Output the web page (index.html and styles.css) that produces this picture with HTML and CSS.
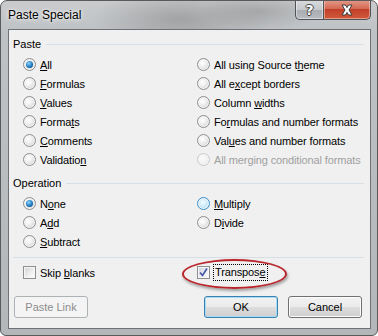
FILE: index.html
```html
<!DOCTYPE html>
<html>
<head>
<meta charset="utf-8">
<link rel="stylesheet" href="styles.css">
</head>
<body>
<div class="window">
  <div class="titlebar">
    <span class="title">Paste Special</span>
    <div class="caption">
      <div class="cap-btn help"><span>?</span></div>
      <div class="cap-btn close">
        <svg width="16" height="12" viewBox="0 0 16 12"><path d="M3 1 L6.5 1 L8 3.6 L9.5 1 L13 1 L10 6 L13 11 L9.5 11 L8 8.4 L6.5 11 L3 11 L6 6 Z" fill="#fff" stroke="#3b3b3b" stroke-width="1" stroke-linejoin="round"/></svg>
      </div>
    </div>
  </div>
  <div class="client">
    <div class="group-head"><span>Paste</span><i class="rule"></i></div>
    <div class="grid">
      <label class="opt"><span class="radio checked"></span><span><u>A</u>ll</span></label>
      <label class="opt"><span class="radio"></span><span>All using Source t<u>h</u>eme</span></label>
      <label class="opt"><span class="radio"></span><span><u>F</u>ormulas</span></label>
      <label class="opt"><span class="radio"></span><span>All e<u>x</u>cept borders</span></label>
      <label class="opt"><span class="radio"></span><span><u>V</u>alues</span></label>
      <label class="opt"><span class="radio"></span><span>Column <u>w</u>idths</span></label>
      <label class="opt"><span class="radio"></span><span>Forma<u>t</u>s</span></label>
      <label class="opt"><span class="radio"></span><span>Fo<u>r</u>mulas and number formats</span></label>
      <label class="opt"><span class="radio"></span><span><u>C</u>omments</span></label>
      <label class="opt"><span class="radio"></span><span>Val<u>u</u>es and number formats</span></label>
      <label class="opt"><span class="radio"></span><span>Validatio<u>n</u></span></label>
      <label class="opt disabled"><span class="radio"></span><span>All merging conditional formats</span></label>
    </div>
    <div class="group-head second"><span>Operation</span><i class="rule"></i></div>
    <div class="grid">
      <label class="opt"><span class="radio checked"></span><span>N<u>o</u>ne</span></label>
      <label class="opt"><span class="radio hover"></span><span><u>M</u>ultiply</span></label>
      <label class="opt"><span class="radio"></span><span>A<u>d</u>d</span></label>
      <label class="opt"><span class="radio"></span><span>D<u>i</u>vide</span></label>
      <label class="opt"><span class="radio"></span><span><u>S</u>ubtract</span></label>
    </div>
    <div class="sep"></div>
    <div class="grid checks">
      <label class="opt"><span class="check"></span><span>Skip <u>b</u>lanks</span></label>
      <label class="opt"><span class="check checked"><svg width="11" height="11" viewBox="0 0 11 11"><path d="M2 5.5 L4.5 8.5 L9 1.5" fill="none" stroke="#4256a4" stroke-width="1.6"/></svg></span><span class="focus">Transpos<u>e</u></span></label>
    </div>
    <div class="buttons">
      <div class="btn disabled">Paste Link</div>
      <div class="btn default">OK</div>
      <div class="btn">Cancel</div>
    </div>
  </div>
  <div class="ellipse"></div>
</div>
</body>
</html>
```
FILE: styles.css
```css
* { box-sizing: border-box; }
html, body { margin: 0; padding: 0; }
body {
  width: 378px;
  height: 336px;
  background: #fff;
  font-family: "Liberation Sans", Arial, sans-serif;
  font-size: 11px;
  color: #000;
}
.window {
  position: relative;
  width: 378px;
  height: 336px;
  border: 1px solid #5a5a5a;
  border-radius: 7px 7px 6px 6px;
  background:
    radial-gradient(ellipse 90px 30px at 180px 18px, rgba(120,120,120,0.45), rgba(120,120,120,0) 100%),
    radial-gradient(ellipse 60px 20px at 260px 10px, rgba(110,110,110,0.35), rgba(110,110,110,0) 100%),
    linear-gradient(to bottom, #c9cbcd 0, #bfc2c5 30px, #b4b7ba 100%);
  padding: 0 6px 6px 7px;
  display: flex;
  flex-direction: column;
  overflow: hidden;
}
.titlebar {
  height: 28px;
  display: flex;
  align-items: flex-start;
  flex: none;
}
.title {
  margin-top: 6px;
  line-height: 16px;
  font-size: 12px;
  color: #000;
  text-shadow: 0 0 6px rgba(255,255,255,0.9), 0 0 3px rgba(255,255,255,0.8);
}
.caption {
  margin-left: auto;
  display: flex;
  margin-top: -1px;
}
.cap-btn {
  height: 20px;
  display: flex;
  align-items: center;
  justify-content: center;
  border: 1px solid #4f5358;
  border-top: none;
}
.help {
  width: 28px;
  border-radius: 0 0 0 5px;
  border-right: none;
  background: linear-gradient(to bottom, #d9dbde 0, #c6c9cc 50%, #a9adb1 51%, #b8bcc0 100%);
  box-shadow: inset 0 0 0 1px rgba(255,255,255,0.45);
}
.help span {
  font-family: "DejaVu Sans", sans-serif;
  font-weight: bold;
  font-size: 14px;
  line-height: 14px;
  color: #fff;
  text-shadow: -1px 0 #444, 1px 0 #444, 0 -1px #444, 0 1px #444;
}
.close {
  width: 48px;
  border-radius: 0 0 5px 0;
  background: linear-gradient(to bottom, #e49c8c 0, #d46a53 45%, #c2402a 50%, #d05a3a 100%);
  box-shadow: inset 0 0 0 1px rgba(255,220,210,0.5);
}
.client {
  flex: 1;
  background: #f0f0f0;
  border: 1px solid #6e7175;
  display: flex;
  flex-direction: column;
}
.group-head {
  display: flex;
  align-items: center;
  height: 14px;
  margin: 7px 6px 0 4px;
  line-height: 14px;
}
.group-head.second { margin-top: 7px; }
.rule {
  flex: 1;
  height: 1px;
  background: #d5dfe5;
  margin-left: 5px;
}
.grid {
  display: grid;
  grid-template-columns: 174px 1fr;
  grid-auto-rows: 19px;
  padding-left: 14px;
  margin-top: 4px;
  letter-spacing: -0.12px;
}
.opt {
  display: flex;
  align-items: center;
  gap: 4px;
  white-space: nowrap;
}
.opt u { text-decoration: underline; text-underline-offset: 1px; }
.opt.disabled { color: #a0a0a0; }
.radio {
  width: 13px;
  height: 13px;
  border-radius: 50%;
  border: 1px solid #8d8f91;
  background: radial-gradient(circle at 40% 38%, #ffffff 0, #f1f1f1 35%, #d6d6d6 75%, #c8c8c8 100%);
  box-shadow: inset 0 0 0 1px #f4f4f4;
  position: relative;
  flex: none;
}
.radio.checked::after {
  content: "";
  position: absolute;
  left: 2px;
  top: 2px;
  width: 7px;
  height: 7px;
  border-radius: 50%;
  background: radial-gradient(circle at 40% 35%, #9ad4f7 0, #2d8bd0 45%, #0d4f8f 80%, #093563 100%);
}
.radio.hover {
  border-color: #3d8fc7;
  background: radial-gradient(circle at 45% 40%, #f3fbff 0, #cbeafc 50%, #9fd6f5 100%);
}
.opt.disabled .radio {
  border-color: #c9cacb;
  background: radial-gradient(circle at 40% 38%, #fafafa 0, #f0f0f0 60%, #e6e6e6 100%);
}
.sep {
  height: 1px;
  background: #d5dfe5;
  margin: 6px 6px 0 4px;
}
.checks { margin-top: 5px; }
.check {
  width: 13px;
  height: 13px;
  border: 1px solid #8e8f8f;
  background: linear-gradient(135deg, #d2d2d2 0, #f0f0f0 60%, #fdfdfd 100%);
  box-shadow: inset 0 0 0 1px #f6f6f6;
  flex: none;
  display: flex;
  align-items: center;
  justify-content: center;
}
.check.checked {
  background: linear-gradient(135deg, #c9cfd9 0, #eef0f4 60%, #fdfdfd 100%);
}
.focus {
  border: 1px dotted #000;
  padding: 0 1px;
  line-height: 15px;
  margin-left: -1px;
}
.buttons {
  display: flex;
  margin-top: 14px;
  padding: 0 8px 0 5px;
  gap: 10px;
}
.btn {
  width: 74px;
  height: 22px;
  border: 1px solid #707070;
  border-radius: 3px;
  background: linear-gradient(to bottom, #f2f2f2 0, #ebebeb 50%, #dddddd 51%, #cfcfcf 100%);
  box-shadow: inset 0 0 0 1px #fcfcfc;
  display: flex;
  align-items: center;
  justify-content: center;
  font-size: 11px;
}
.btn.disabled {
  border-color: #adb2b5;
  background: #f4f4f4;
  box-shadow: none;
  color: #8c8c8c;
}
.btn.default {
  margin-left: auto;
  border-color: #3c7fb1;
  box-shadow: inset 0 0 0 1px #a6def7;
}
.ellipse {
  position: absolute;
  left: 181px;
  top: 258px;
  width: 105px;
  height: 30px;
  border: 2px solid #b9252a;
  border-radius: 50%;
  box-shadow: 1px 2px 3px rgba(0,0,0,0.35);
}
```
